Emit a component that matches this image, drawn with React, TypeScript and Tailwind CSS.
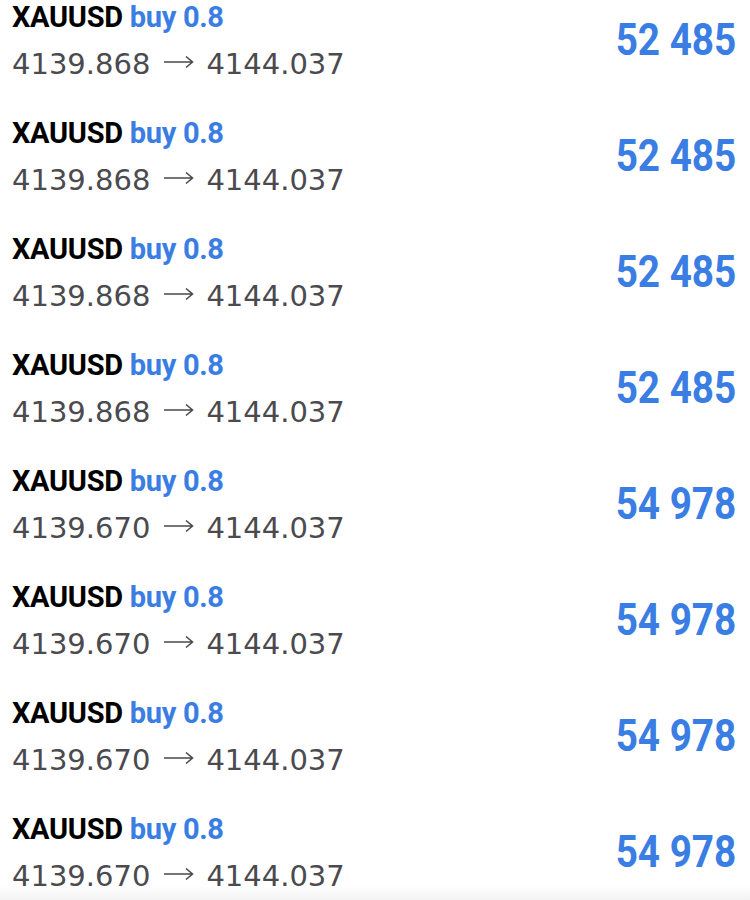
type Trade = {
  open: string;
  close: string;
  profit: string;
};

const trades: Trade[] = [
  { open: "4139.868", close: "4144.037", profit: "52 485" },
  { open: "4139.868", close: "4144.037", profit: "52 485" },
  { open: "4139.868", close: "4144.037", profit: "52 485" },
  { open: "4139.868", close: "4144.037", profit: "52 485" },
  { open: "4139.670", close: "4144.037", profit: "54 978" },
  { open: "4139.670", close: "4144.037", profit: "54 978" },
  { open: "4139.670", close: "4144.037", profit: "54 978" },
  { open: "4139.670", close: "4144.037", profit: "54 978" },
];

const Arrow = () => (
  <svg width="30" height="14" viewBox="0 0 30 14" className="ml-[14px] mr-[12px] mb-[4px]" fill="none">
    <path d="M0 7 H28.5 M22 1.5 L28.5 7 L22 12.5" stroke="#4a4a4f" strokeWidth="1.6" />
  </svg>
);

const TradeRow = ({ trade }: { trade: Trade }) => (
  <div className="h-[116px] flex items-center justify-between pl-[12px] pr-[14px]">
    <div className="flex flex-col">
      <p className="font-['Roboto',sans-serif] font-bold text-[29px] leading-[30px] tracking-[-0.3px]">
        <span className="text-black">XAUUSD</span>{" "}
        <span className="text-[#3a7ee4]">buy 0.8</span>
      </p>
      <p className="flex items-center font-['DejaVu_Sans',sans-serif] text-[29px] leading-[40px] text-[#4a4a4f] mt-[12px]">
        <span>{trade.open}</span>
        <Arrow />
        <span>{trade.close}</span>
      </p>
    </div>
    <span className="inline-block mb-[8px] origin-right scale-x-[0.86] font-['Roboto',sans-serif] font-bold text-[45px] leading-none text-[#3a7ee4]">
      {trade.profit}
    </span>
  </div>
);

const App = () => {
  return (
    <div className="w-[750px] h-[900px] overflow-hidden bg-white relative">
      <div className="flex flex-col -mt-[15px]">
        {trades.map((trade, i) => (
          <TradeRow key={i} trade={trade} />
        ))}
      </div>
      <div className="absolute bottom-0 left-0 right-0 h-[14px] bg-gradient-to-b from-white to-[#f3f3f3]" />
    </div>
  );
};

export default App;
